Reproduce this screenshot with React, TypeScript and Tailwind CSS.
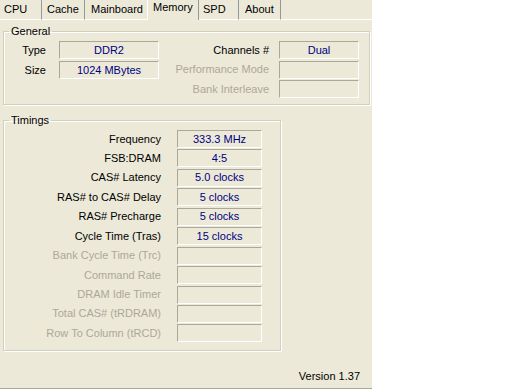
import React from "react";

const font = { fontFamily: '"Liberation Sans", Arial, sans-serif' };

type Tab = { name: string; w: string; pad: string; active?: boolean; sep?: boolean };

const tabs: Tab[] = [
  { name: "CPU", w: "w-[42px]", pad: "pl-[4px]", sep: true },
  { name: "Cache", w: "w-[43px]", pad: "pl-[5px]", sep: true },
  { name: "Mainboard", w: "w-[62px]", pad: "pl-[6px]" },
  { name: "Memory", w: "w-[52px]", pad: "pl-[5px]", active: true },
  { name: "SPD", w: "w-[40px]", pad: "pl-[4px]", sep: true },
  { name: "About", w: "w-[42px]", pad: "pl-[6px]", sep: true },
];

function Box({ value, w }: { value?: string; w: string }) {
  return (
    <div
      className={`${w} h-[18px] shrink-0 border border-t-[#aca899] border-l-[#aca899] border-b-white border-r-white flex items-center justify-center text-[#000080] leading-none`}
    >
      {value}
    </div>
  );
}

function Row({
  label,
  value,
  off,
  lw,
  gap,
  bw,
}: {
  label: string;
  value?: string;
  off?: boolean;
  lw: string;
  gap: string;
  bw: string;
}) {
  return (
    <div className={`flex items-center ${gap}`}>
      <div className={`${lw} text-right leading-[13px] ${off ? "text-[#aca899]" : "text-black"}`}>{label}</div>
      <Box value={value} w={bw} />
    </div>
  );
}

const timings: [string, string?][] = [
  ["Frequency", "333.3 MHz"],
  ["FSB:DRAM", "4:5"],
  ["CAS# Latency", "5.0 clocks"],
  ["RAS# to CAS# Delay", "5 clocks"],
  ["RAS# Precharge", "5 clocks"],
  ["Cycle Time (Tras)", "15 clocks"],
  ["Bank Cycle Time (Trc)"],
  ["Command Rate"],
  ["DRAM Idle Timer"],
  ["Total CAS# (tRDRAM)"],
  ["Row To Column (tRCD)"],
];

export default function App() {
  return (
    <div className="w-[512px] h-[390px] bg-white text-[11px]" style={font}>
      <div className="w-[372px] h-[389px] bg-[#ece9d8] border-b border-[#aca899] flex flex-col">
        {/* tab strip */}
        <div className="flex h-[20px] shrink-0">
          {tabs.map((t) => (
            <div
              key={t.name}
              className={`${t.w} ${t.pad} h-[20px] ${
                t.active
                  ? "pt-[1px] border-l border-white border-r border-r-[#919b9c]"
                  : "pt-[3px] border-b border-white"
              } ${t.sep ? "border-r border-r-[#919b9c]" : ""} leading-[13px] text-black`}
            >
              {t.name}
            </div>
          ))}
          <div className="flex-1 border-b border-white" />
        </div>

        {/* General */}
        <fieldset className="mt-[5px] ml-[3px] w-[367px] h-[80px] border border-[#d0d0bf] shadow-[inset_1px_1px_0_#fff,1px_1px_0_#fff]">
          <legend className="ml-[5px] px-[2px] leading-[13px]">General</legend>
          <div className="flex pt-[3px]">
            <div className="flex flex-col gap-[2px]">
              <Row label="Type" value="DDR2" lw="w-[42px]" gap="gap-[13px]" bw="w-[100px]" />
              <Row label="Size" value="1024 MBytes" lw="w-[42px]" gap="gap-[13px]" bw="w-[100px]" />
            </div>
            <div className="flex flex-col gap-[1.5px] ml-[12px]">
              <Row label="Channels #" value="Dual" lw="w-[98px]" gap="gap-[10px]" bw="w-[80px]" />
              <Row label="Performance Mode" off lw="w-[98px]" gap="gap-[10px]" bw="w-[80px]" />
              <Row label="Bank Interleave" off lw="w-[98px]" gap="gap-[10px]" bw="w-[80px]" />
            </div>
          </div>
        </fieldset>

        {/* Timings */}
        <fieldset className="mt-[9px] ml-[3px] w-[278px] h-[237px] border border-[#d0d0bf] shadow-[inset_1px_1px_0_#fff,1px_1px_0_#fff]">
          <legend className="ml-[5px] px-[2px] leading-[13px]">Timings</legend>
          <div className="flex flex-col gap-[1.45px] pt-[3px]">
            {timings.map(([l, v]) => (
              <Row key={l} label={l} value={v} off={!v} lw="w-[157px]" gap="gap-[16px]" bw="w-[85px]" />
            ))}
          </div>
        </fieldset>

        <div className="mt-auto mb-[5px] pr-[12px] text-right leading-[13px] text-black">Version 1.37</div>
      </div>
    </div>
  );
}
